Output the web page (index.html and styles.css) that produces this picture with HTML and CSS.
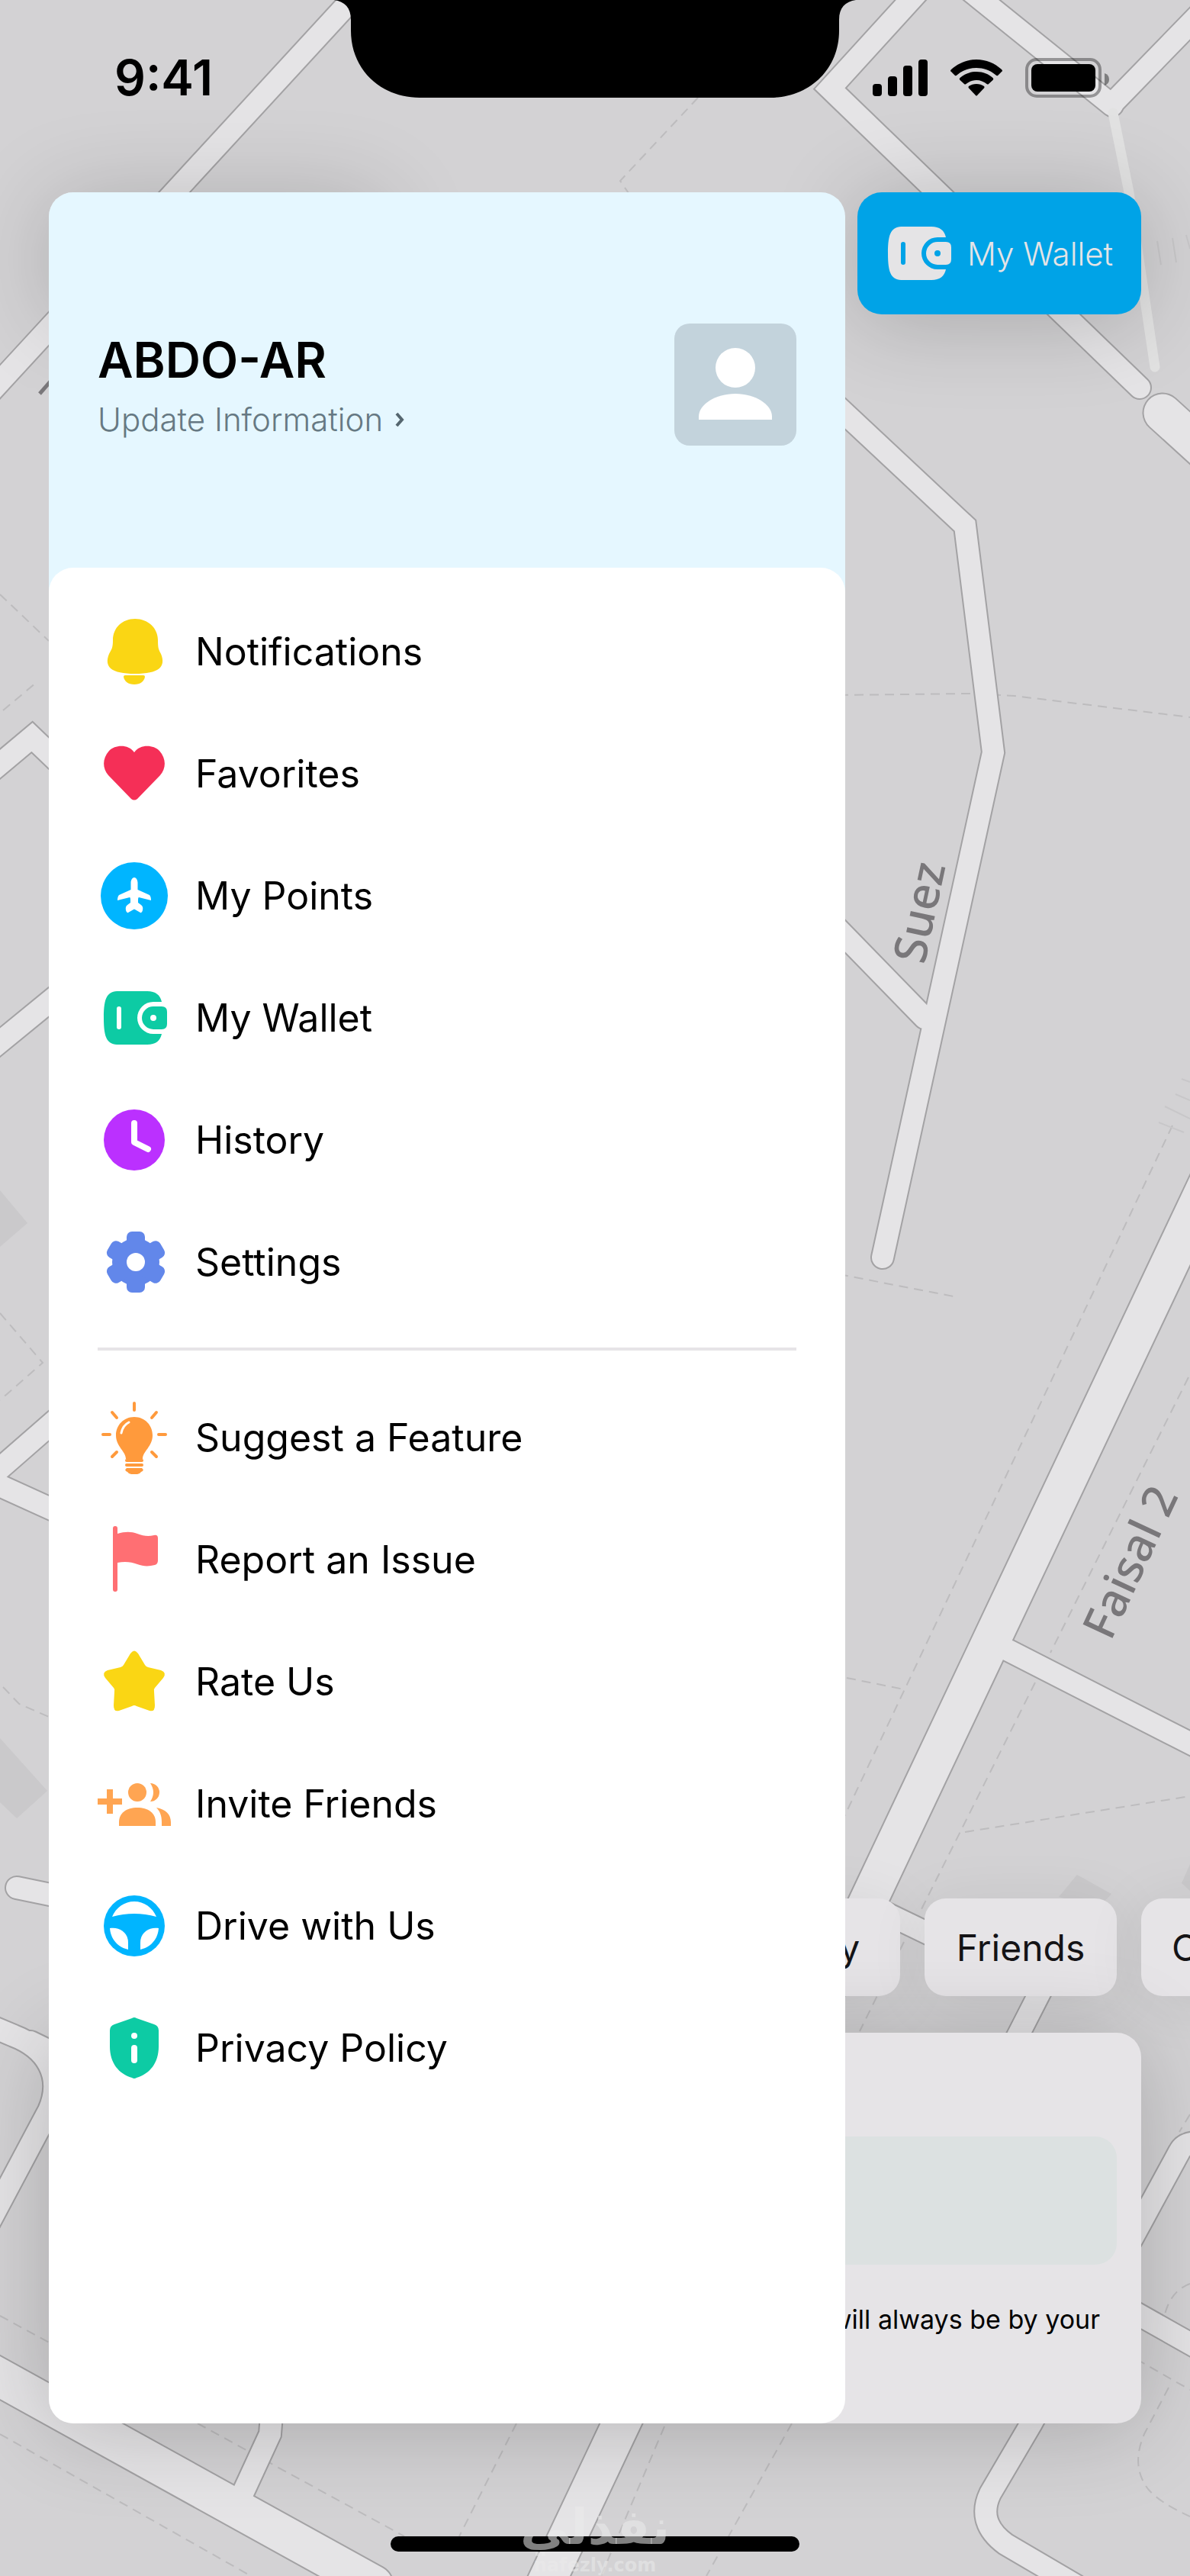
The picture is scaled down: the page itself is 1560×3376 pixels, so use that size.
FILE: index.html
```html
<!DOCTYPE html>
<html lang="en">
<head>
  <meta charset="UTF-8" />
  <meta name="viewport" content="width=device-width, initial-scale=1.0"/>
  <title>Menu</title>
  <link rel="stylesheet" href="styles.css">
</head>
<body>

  <div class="screen">

    <!-- map -->
    <svg class="map" viewBox="0 0 1560 3376" preserveAspectRatio="xMidYMid slice" aria-hidden="true">
      <defs>
        <g id="roads">
          <path class="road" d="M479 -20 L-20 522"/>
          <path class="road" d="M1212 -20 L1088 116 L1494 508"/>
          <path class="road" d="M1262 -20 L1458 138"/>
          <path class="road" d="M1460 134 L1600 -10"/>
          <path class="road main" d="M1524 541 L1600 610"/>
          <path class="road" d="M1050 488 L1265 689 L1302 986 L1157 1648"/>
          <path class="road" d="M1060 1178 L1212 1334"/>
          <path class="road main" d="M1607 1500 L700 3418"/>
          <path class="road" d="M1322 2163 L1600 2305"/>
          <path class="road" d="M1140 2497 L1366 2606 L1300 2735"/>
          <path class="road" d="M1600 2814 Q1556 2800 1546 2820 L1496 2912 L1352 3176 L1298 3268 Q1280 3306 1318 3334 L1410 3388"/>
          <path class="road" d="M1460 3015 L1600 3094"/>
          <path class="road" d="M-20 1018 L42 966 L90 1012"/>
          <path class="road" d="M-20 1382 L90 1292"/>
          <path class="road" d="M90 1846 L-20 1942"/>
          <path class="road" d="M90 1988 L-20 1938"/>
          <path class="road" d="M22 2474 L90 2488"/>
          <path class="road" d="M-20 2652 L18 2668 C60 2684 84 2720 64 2766 L-20 2924"/>
          <path class="road" d="M40 2676 L110 2710"/>
          <path class="road main" d="M-20 3105 L490 3387"/>
          <path class="road" d="M358 3140 L354 3190 L318 3268"/>
        </g>
      </defs>
      <g class="blocks">
        <path d="M0 1560 L36 1603 L0 1634z"/>
        <path d="M0 2278 L62 2347 L22 2383 L0 2362z"/>
        <path d="M1412 2457 L1457 2482 L1440 2500 L1388 2486z"/>
        <path d="M1560 2443 L1549 2468 L1560 2478z"/>
      </g>
      <g class="paths">
        <path d="M915 128 L813 237 L826 256"/>
        <path d="M1100 911 L1270 909 L1330 912 L1560 940"/>
        <path d="M1100 1670 L1255 1700"/>
        <path d="M1537 1475 L1100 2395"/>
        <path d="M1558 1805 L1377 2166"/>
        <path d="M1357 2205 L1205 2508"/>
        <path d="M1185 2545 L1127 2662"/>
        <path d="M1110 2199 L1185 2214"/>
        <path d="M1265 2401 L1560 2354"/>
        <path d="M1560 2771 L1546 2794"/>
        <path d="M1560 2993 Q1535 3002 1527 3033"/>
        <path d="M1490 3092 L1560 3132"/>
        <path d="M1532 3129 L1500 3190 Q1482 3232 1505 3262 Q1520 3280 1560 3298"/>
        <path d="M259 3176 L530 3324"/>
        <path d="M677 3176 L602 3324"/>
        <path d="M871 3180 L788 3376"/>
        <path d="M1038 3176 L926 3376"/>
        <path d="M0 3190 L329 3376"/>
        <path d="M0 3035 L70 3073"/>
        <path d="M0 779 L64 840"/>
        <path d="M4 931 L47 895"/>
        <path d="M0 1721 L56 1786 L0 1835"/>
        <path d="M4 2211 L25 2233 L64 2250"/>
      </g>
      <path class="steps" d="M1517 316 L1522 347 M1537 312 L1542 344 M1555 308 L1560 326 M1519 1471 L1552 1484 M1527 1450 L1560 1466 M1541 1434 L1560 1442 M1549 1414 L1560 1418"/>
      <use class="road-edge" href="#roads"/>
      <use class="road-fill" href="#roads"/>
      <path class="lane" d="M1459 148 L1480 252 L1514 481"/>
      <path class="label-stub" d="M52 516 L66 500"/>
      <text class="street" transform="translate(1212 1265) rotate(-78)">Suez</text>
      <text class="street" transform="translate(1456 2152) rotate(-65)">Faisal 2</text>
    </svg>

    <!-- phone notch -->
    <svg class="notch" viewBox="0 0 684 128" aria-hidden="true">
      <path d="M0 0 C14 2 22 10 22 26 V40 C22 92 62 128 112 128 H572 C622 128 662 92 662 40 V26 C662 10 670 2 684 0z"/>
    </svg>

    <header class="status-bar">
      <span class="time">9:41</span>
      <div class="status-icons">
        <svg width="72" height="48" viewBox="0 0 72 48" aria-hidden="true">
          <rect x="0" y="32" width="12" height="16" rx="4"/>
          <rect x="20" y="22" width="12" height="26" rx="4"/>
          <rect x="40" y="8" width="12" height="40" rx="4"/>
          <rect x="60" y="0" width="12" height="48" rx="4"/>
        </svg>
        <svg width="68" height="48" viewBox="0 0 68 48" aria-hidden="true">
          <path d="M34 0 C47 0 58 5 67 13 Q69 15 67 16 L62 21 Q61 22 59 20 C52 14 43 11 34 11 C25 11 16 14 9 20 Q7 22 6 21 L1 16 Q-1 15 1 13 C10 5 21 0 34 0z"/>
          <path d="M34 16 C43 16 50 19 55.500 24 Q57 25.500 55.500 27 L50 32 Q49 33 47.500 32 C44 29 39 27 34 27 C29 27 24 29 20.500 32 Q19 33 18 32 L12.500 27 Q11 25.500 12.500 24 C18 19 25 16 34 16z"/>
          <path d="M34 32 C38 32 41 33 44 35 Q45 36 44 37.500 L35 47 Q34 48 33 47 L24 37.500 Q23 36 24 35 C27 33 30 32 34 32z"/>
        </svg>
        <svg width="110" height="52" viewBox="0 0 110 52" aria-hidden="true">
          <rect class="battery-case" x="2" y="2" width="96" height="48" rx="13"/>
          <rect x="8" y="8" width="84" height="36" rx="8"/>
          <path class="battery-tip" d="M104 20 Q110 22 110 28 Q110 34 104 36z"/>
        </svg>
      </div>
    </header>

    <main class="home">
      <div class="top-bar">
        <div class="search-bar"></div>
        <button type="button" class="wallet-button">
          <svg class="icon" viewBox="0 0 96 96" aria-hidden="true"><use href="#wallet"/></svg>
          My Wallet
        </button>
      </div>

      <div class="chips">
        <button type="button" class="chip">Family</button>
        <button type="button" class="chip">Friends</button>
        <button type="button" class="chip chip-last">C</button>
      </div>

      <section class="card">
        <div class="card-field"></div>
        <p>We will always be by your</p>
      </section>
    </main>

    <!-- side menu -->
    <aside class="drawer">
      <div class="profile">
        <div class="profile-text">
          <h1>ABDO-AR</h1>
          <a href="#">Update Information
            <svg width="12" height="20" viewBox="0 0 12 20" aria-hidden="true"><path d="M2 2 L9 10 L2 18"/></svg>
          </a>
        </div>
        <svg class="avatar" viewBox="0 0 160 160" aria-hidden="true">
          <circle cx="80" cy="58" r="26"/>
          <path d="M32 126 V122 C32 106 54 92 80 92 C106 92 128 106 128 122 V126z"/>
        </svg>
      </div>

      <nav class="menu">
        <a href="#">
          <svg class="icon yellow" viewBox="0 0 96 96" aria-hidden="true">
            <path d="M49 5 C66 5 79 17 79 33 C79 44 80 45 83 51 C90 68 80 77 49 77 C18 77 8 68 15 51 C18 45 20 44 20 33 C20 17 32 5 49 5z"/>
            <path d="M36 79 H60 Q62 79 62 81 C61 87 56 91 48 91 C40 91 35 87 34 81 Q34 79 36 79z"/>
          </svg>
          Notifications
        </a>
        <a href="#">
          <svg class="icon red" viewBox="0 0 96 96" aria-hidden="true">
            <path d="M48 20 C56 9 73 10 81 18 C90 28 90 41 82 50 L52 81 Q48 84 44 81 L14 50 C6 41 6 28 15 18 C23 10 40 9 48 20z"/>
          </svg>
          Favorites
        </a>
        <a href="#">
          <svg class="icon sky" viewBox="0 0 96 96" aria-hidden="true">
            <circle cx="48" cy="48" r="44"/>
            <path class="cut" d="M48 24 C51 24 52.500 28 52.500 31 V40 L68 47 Q70 49 70 54 L54 50 Q53 50 53 53 V57 L57 60 Q60 62 59 67 Q58 71 56 70 L49 66 Q48 65 47 66 L40 70 Q38 71 37 67 Q36 62 39 60 L43 57 V53 Q43 50 42 50 L26 54 Q26 49 28 47 L43.500 40 V31 C43.500 28 45 24 48 24z"/>
          </svg>
          My Points
        </a>
        <a href="#">
          <svg class="icon green" viewBox="0 0 96 96" aria-hidden="true">
            <g id="wallet">
              <path fill-rule="evenodd" d="M84 27 H73 A21 21 0 0 0 73 69 H84 C82 78 76 83 65 83 H28 C13 83 8 76 8 48 C8 20 13 13 28 13 H65 C76 13 82 18 84 27z M28 33 Q25 33 25 36 V60 Q25 63 28 63 Q31 63 31 60 V36 Q31 33 28 33z"/>
              <path fill-rule="evenodd" d="M73 33 H84 Q91 33 91 40 V56 Q91 63 84 63 H73 A15 15 0 0 1 73 33z M73 44 A4 4 0 0 0 73 52 A4 4 0 0 0 73 44z"/>
            </g>
          </svg>
          My Wallet
        </a>
        <a href="#">
          <svg class="icon purple" viewBox="0 0 96 96" aria-hidden="true">
            <circle cx="48" cy="48" r="40"/>
            <path class="cut-line" d="M48 26 V51 L66 60"/>
          </svg>
          History
        </a>
        <a href="#">
          <svg class="icon blue" viewBox="0 0 96 96" aria-hidden="true">
            <circle cx="50" cy="48" r="31"/>
            <rect x="38" y="8" width="24" height="80" rx="7"/>
            <rect x="38" y="8" width="24" height="80" rx="7" transform="rotate(60 50 48)"/>
            <rect x="38" y="8" width="24" height="80" rx="7" transform="rotate(120 50 48)"/>
            <circle class="cut" cx="50" cy="48" r="12"/>
          </svg>
          Settings
        </a>
      </nav>

      <hr>

      <nav class="menu">
        <a href="#">
          <svg class="icon orange" viewBox="0 0 96 96" aria-hidden="true">
            <path class="rays" d="M48 3 V12 M7 44 H16 M80 44 H89 M19 15 L25 22 M77 15 L71 22 M19 73 L25 67 M77 73 L71 67"/>
            <path d="M48 21 C62 21 72 32 72 45 C72 60 59 66 59 76 H37 C37 66 24 60 24 45 C24 32 34 21 48 21z"/>
            <path class="shine" d="M31 42 Q33 32 41 28"/>
            <rect x="36" y="76" width="24" height="4" rx="2"/>
            <rect x="36" y="82" width="24" height="4" rx="2"/>
            <path d="M38 88 H58 Q62 91 57 93 Q55 96 52 96 H44 Q41 96 39 93 Q34 91 38 88z"/>
          </svg>
          Suggest a Feature
        </a>
        <a href="#">
          <svg class="icon coral" viewBox="0 0 96 96" aria-hidden="true">
            <rect x="20" y="4" width="6" height="86" rx="3"/>
            <path d="M26 14 C36 11 44 11 52 14 C60 17 66 18 74 16 Q79 15 79 20 V49 Q79 54 75 55 C67 57 60 57 52 54 C44 51 36 50 26 52z"/>
          </svg>
          Report an Issue
        </a>
        <a href="#">
          <svg class="icon yellow" viewBox="0 0 96 96" aria-hidden="true">
            <path d="M43 11 Q48 4 53 11 L62 26 Q63 28 66 29 L83 33 Q91 36 86 43 L75 56 Q73 58 74 61 L75 79 Q75 88 68 86 L51 80 Q48 78 45 80 L28 86 Q21 88 21 79 L22 61 Q23 58 21 56 L10 43 Q5 36 13 33 L30 29 Q33 28 34 26z"/>
          </svg>
          Rate Us
        </a>
        <a href="#">
          <svg class="icon peach" viewBox="0 0 96 96" aria-hidden="true">
            <path d="M12 29 H20 V41 H32 V49 H20 V61 H12 V49 H0 V41 H12z"/>
            <circle cx="52" cy="33" r="12"/>
            <path d="M28 77 V72 C28 60 38 53 52 53 C66 53 76 60 76 72 V77z"/>
            <path d="M69 21 A12 12 0 1 1 69 45 Q77 33 69 21z"/>
            <path d="M77 53 C89 55 96 62 96 72 V77 H84 V72 C84 64 82 58 77 53z"/>
          </svg>
          Invite Friends
        </a>
        <a href="#">
          <svg class="icon sky" viewBox="0 0 96 96" aria-hidden="true">
            <circle cx="48" cy="48" r="40"/>
            <path class="cut" d="M19 36 C24 24 35 16 48 16 C61 16 72 24 77 36 Q48 28 19 36z"/>
            <path class="cut" d="M16 51 C28 49 40 56 40 70 V79 C27 76 17 66 16 51z"/>
            <path class="cut" d="M80 51 C68 49 56 56 56 70 V79 C69 76 79 66 80 51z"/>
          </svg>
          Drive with Us
        </a>
        <a href="#">
          <svg class="icon green" viewBox="0 0 96 96" aria-hidden="true">
            <path d="M45 9 Q48 7 51 9 L74 17 Q80 19 80 25 V46 C80 68 68 82 51 87 Q48 89 45 87 C28 82 16 68 16 46 V25 Q16 19 22 17z"/>
            <circle class="cut" cx="48" cy="32" r="4"/>
            <rect class="cut" x="44" y="44" width="8" height="24" rx="4"/>
          </svg>
          Privacy Policy
        </a>
      </nav>
    </aside>

    <div class="home-indicator"></div>
    <div class="watermark" aria-hidden="true">
      <span lang="ar">نفذلي</span>
      <small>nafezly.com</small>
    </div>

  </div>

</body>
</html>
```

FILE: styles.css
```css
* {
  margin: 0;
  padding: 0;
  box-sizing: border-box;
}
body {
  font-family: Inter, 'Liberation Sans', sans-serif;
  background: #d3d2d4;
  color: #000;
}
a {
  color: inherit;
  text-decoration: none;
}
button {
  font: inherit;
  border: none;
  cursor: pointer;
}
.screen {
  position: relative;
  display: flex;
  flex-direction: column;
  min-height: 100vh;
  padding-bottom: 200px;
  overflow: hidden;
}

/* map */
.map {
  position: absolute;
  inset: 0;
  width: 100%;
  height: 100%;
}
.road {
  --w: 28px;
  fill: none;
  stroke-linecap: round;
  stroke-linejoin: miter;
  stroke-width: calc(var(--w) + var(--edge));
}
.road.main {
  --w: 49px;
}
.road-edge {
  --edge: 4px;
  stroke: #a3a2a4;
}
.road-fill {
  --edge: 0px;
  stroke: #e5e4e6;
}
.lane {
  fill: none;
  stroke: #e2e2e2;
  stroke-width: 13;
  stroke-linecap: round;
}
.blocks {
  fill: #cac9cb;
}
.paths {
  fill: none;
  stroke: #bdbcbe;
  stroke-width: 2;
  stroke-dasharray: 12 8;
}
.steps {
  fill: none;
  stroke: #c8c7c9;
  stroke-width: 2;
}
.label-stub {
  stroke: #79777a;
  stroke-width: 5;
}
.street {
  font-family: 'Noto Sans', sans-serif;
  font-size: 60px;
  font-weight: 500;
  fill: #79777a;
}

/* status bar */
.notch {
  position: absolute;
  top: 0;
  left: 50%;
  width: 684px;
  height: 128px;
  transform: translateX(-50%);
}
.status-bar {
  position: relative;
  display: flex;
  justify-content: space-between;
  align-items: center;
  padding: 64px 106px 0 150px;
  margin-bottom: 112px;
}
.time {
  font-size: 64px;
  font-weight: 600;
  line-height: 76px;
}
.status-icons {
  display: flex;
  align-items: center;
  gap: 30px;
}
.battery-case {
  fill: none;
  stroke: #000;
  stroke-width: 4;
  opacity: 0.35;
}
.battery-tip {
  opacity: 0.4;
}

/* home screen behind the menu */
.home {
  position: relative;
  flex: 1;
  display: flex;
  flex-direction: column;
}
.top-bar {
  display: flex;
  justify-content: space-between;
  padding: 0 64px;
}
.search-bar {
  width: 440px;
  height: 160px;
  border-radius: 32px;
  background: #e5e4e6;
  box-shadow: 0 8px 120px rgba(0, 0, 0, 0.18);
}
.wallet-button {
  display: flex;
  align-items: center;
  gap: 16px;
  width: 372px;
  height: 160px;
  padding: 0 32px;
  border-radius: 32px;
  background: #00a3e7;
  color: #e5e4e6;
  fill: #e5e4e6;
  font-size: 42px;
  font-weight: 300;
  white-space: nowrap;
  box-shadow: 0 8px 120px rgba(0, 0, 0, 0.2);
}
.chips {
  display: flex;
  justify-content: flex-end;
  gap: 32px;
  margin-top: auto;
  margin-bottom: 48px;
}
.chip {
  min-width: 252px;
  height: 128px;
  padding: 0 40px;
  border-radius: 28px;
  background: #e6e4e7;
  color: #141316;
  font-size: 48px;
  box-shadow: 0 8px 80px rgba(0, 0, 0, 0.08);
}
.chip-last {
  flex-shrink: 0;
  margin-right: -188px;
  text-align: left;
}
.card {
  height: 512px;
  margin: 0 64px;
  padding: 136px 32px 0;
  border-radius: 32px;
  background: #e6e4e7;
  box-shadow: 0 8px 120px rgba(0, 0, 0, 0.2);
}
.card-field {
  height: 168px;
  border-radius: 28px;
  background: #dce1e1;
}
.card p {
  margin-top: 48px;
  padding-right: 22px;
  font-size: 34px;
  line-height: 48px;
  text-align: right;
}

/* side menu */
.drawer {
  position: absolute;
  top: 252px;
  bottom: 200px;
  left: 64px;
  width: calc(100% - 516px);
  display: flex;
  flex-direction: column;
  border-radius: 32px;
  background: linear-gradient(#e5f7ff 50%, #fff 50%);
}
.profile {
  display: flex;
  justify-content: space-between;
  padding: 172px 64px 160px;
}
.profile-text {
  padding-top: 8px;
}
.profile h1 {
  margin-bottom: 8px;
  font-size: 64px;
  font-weight: 600;
  line-height: 80px;
}
.profile a {
  display: flex;
  align-items: center;
  gap: 16px;
  color: #667983;
  font-size: 42px;
  font-weight: 300;
  line-height: 60px;
}
.profile a path {
  fill: none;
  stroke: #55666f;
  stroke-width: 4;
}
.avatar {
  width: 160px;
  height: 160px;
  border-radius: 20px;
  background: #c3d3dc;
  fill: #fff;
}
.menu {
  display: flex;
  flex-direction: column;
  padding: 30px 64px 0;
  background: #fff;
}
.menu:first-of-type {
  padding-bottom: 32px;
  border-radius: 32px 32px 0 0;
}
.menu a {
  display: flex;
  align-items: center;
  gap: 32px;
  height: 160px;
  font-size: 50px;
}
.drawer hr {
  height: 4px;
  margin: 0 64px 4px;
  border: none;
  background: #e6e4e7;
}
.icon {
  flex: none;
  width: 96px;
  height: 96px;
}
.yellow { fill: #fad614; }
.red { fill: #f52f57; }
.sky { fill: #00b5ff; }
.green { fill: #0dcba4; }
.purple { fill: #bb30ff; }
.blue { fill: #6287ea; }
.orange { fill: #ff9a3c; }
.coral { fill: #ff6f73; }
.peach { fill: #ffa552; }
.cut {
  fill: #fff;
}
.cut-line {
  fill: none;
  stroke: #fff;
  stroke-width: 8;
  stroke-linecap: round;
  stroke-linejoin: round;
}
.rays {
  stroke: #ff9a3c;
  stroke-width: 4;
  stroke-linecap: round;
}
.shine {
  fill: none;
  stroke: #fff;
  stroke-width: 3;
  stroke-linecap: round;
}

/* bottom edge */
.home-indicator {
  position: absolute;
  bottom: 32px;
  left: 50%;
  width: 536px;
  height: 20px;
  border-radius: 10px;
  background: #000;
  transform: translateX(-50%);
}
.watermark {
  position: absolute;
  bottom: 0;
  left: 50%;
  display: flex;
  flex-direction: column;
  align-items: center;
  font-family: 'DejaVu Sans', sans-serif;
  font-weight: bold;
  color: rgba(235, 235, 235, 0.55);
  transform: translateX(-50%);
}
.watermark span {
  font-size: 64px;
  line-height: 72px;
}
.watermark small {
  font-size: 24px;
  line-height: 28px;
}
```
